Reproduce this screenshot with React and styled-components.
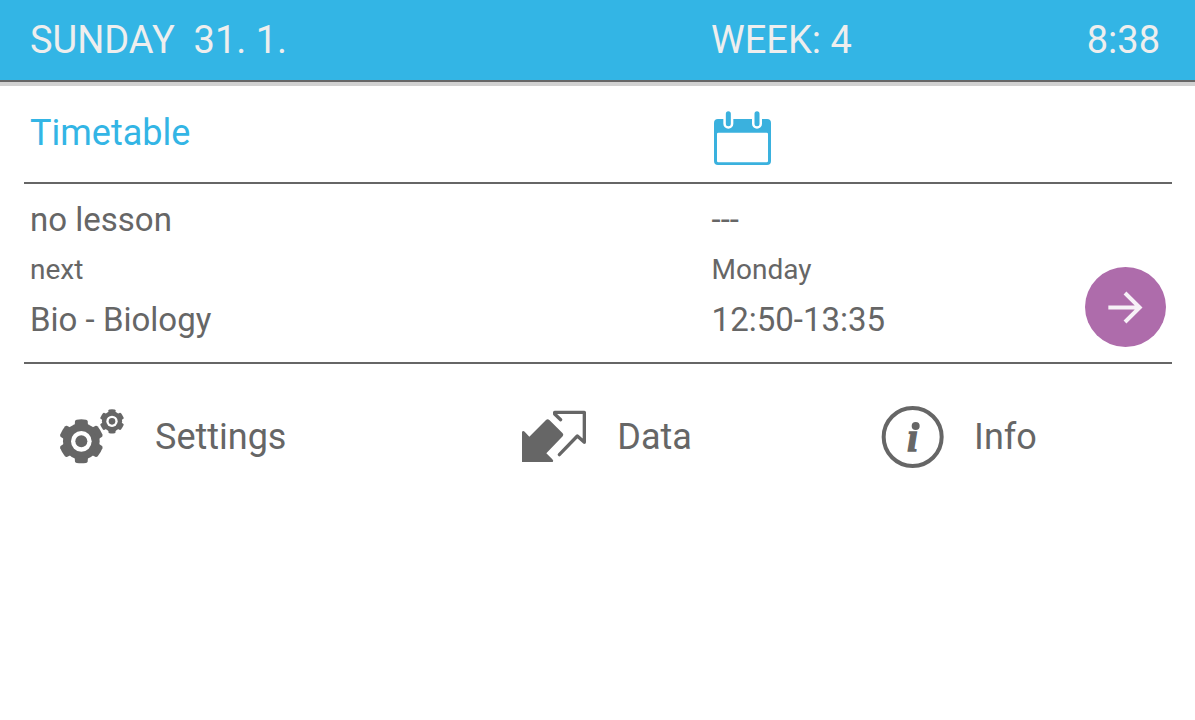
import React from "react";
import styled, {createGlobalStyle} from "styled-components";

const BLUE = '#33b5e5';
const GREY = '#666666';

const GlobalStyle = createGlobalStyle`
    body {
        margin: 0;
        background: #ffffff;
        color: ${GREY};
        font-family: Roboto, "Liberation Sans", sans-serif;
    }

    svg {
        display: block;
        flex: none;
    }
`;

const Header = styled.header`
    display: grid;
    grid-template-columns: 3fr 2fr;
    padding: 0 30px;
    background: ${BLUE};
    border-bottom: 2px solid ${GREY};
    box-shadow: 0 4px 0 #d1d1d1;
    color: #eeeeee;
    font-size: 38px;
    line-height: 80px;
    white-space: pre;
`;

const HeaderEnd = styled.div`
    display: flex;
    justify-content: space-between;
    padding-right: 5px;
`;

const Main = styled.main`
    padding: 4px 23px 0 24px;
`;

const TitleRow = styled.div`
    display: grid;
    grid-template-columns: 3fr 2fr;
    height: 96px;
    padding: 0 6px;
    border-bottom: 2px solid ${GREY};
`;

const Title = styled.h1`
    margin: 0;
    color: ${BLUE};
    font-size: 36px;
    font-weight: 400;
    line-height: 94px;
`;

const CalendarLink = styled.a`
    justify-self: start;
    padding: 24px 2px 0;
`;

const Lessons = styled.section`
    display: grid;
    grid-template-columns: 3fr 2fr;
    grid-template-rows: 50px 50px 52px;
    padding: 11px 6px 15px;
    border-bottom: 2px solid ${GREY};
`;

const Cell = styled.div`
    grid-column: ${(props) => props.$column};
    grid-row: ${(props) => props.$row};
    font-size: ${(props) => props.$small ? '28px' : '33px'};
    line-height: 50px;
`;

const NextButton = styled.button`
    grid-column: 2;
    grid-row: 2 / 4;
    place-self: end;
    display: flex;
    align-items: center;
    justify-content: center;
    width: 81px;
    height: 80px;
    padding: 0;
    border: 0;
    border-radius: 50%;
    background: #ae6cab;
    cursor: pointer;
`;

const Menu = styled.nav`
    display: grid;
    grid-template-columns: 31fr 24fr 21fr;
    padding: 40px 0 0 59px;
`;

const MenuLink = styled.a`
    display: flex;
    align-items: center;
    gap: 30px;
    height: 65px;
    color: ${GREY};
    font-size: 36px;
    text-decoration: none;
`;

const CalendarIcon = () => (
    <svg width="58" height="56" viewBox="42 30 174 168" fill="none" aria-hidden="true">
        <path
            fill="#3ab1de"
            fillRule="evenodd"
            d="M54 57h147a12 12 0 0 1 12 12v114a12 12 0 0 1-12 12H54a12 12 0 0 1-12-12V69a12 12 0 0 1 12-12zM55 98a4 4 0 0 0-4 4v81a4 4 0 0 0 4 4h145a4 4 0 0 0 4-4v-81a4 4 0 0 0-4-4z"
        />
        <path stroke="#ffffff" strokeWidth="30" strokeLinecap="round" d="M85 40v31M171 40v31"/>
        <path stroke="#3ab1de" strokeWidth="15" strokeLinecap="round" d="M85 41v30M171 41v30"/>
    </svg>
);

const Gear = ({x, y, scale}) => (
    <g transform={`translate(${x} ${y}) scale(${scale})`}>
        <circle r="55" fill={GREY}/>
        {
            [0, 60, 120, 180, 240, 300].map((angle) => (
                <path
                    key={angle}
                    transform={`rotate(${angle})`}
                    fill={GREY}
                    d="M-20 -46L-19 -61Q-18 -64 -14 -65Q0 -67 14 -65Q18 -64 19 -61L20 -46z"
                />
            ))
        }
        <circle r="31" fill="#ffffff"/>
        <circle r="18" fill={GREY}/>
    </g>
);

const SettingsIcon = () => (
    <svg width="66" height="58" viewBox="27 23 198 174" aria-hidden="true">
        <Gear x={94} y={123} scale={1}/>
        <Gear x={186} y={63} scale={0.55}/>
    </svg>
);

const DataIcon = () => (
    <svg width="65" height="56" viewBox="36 27 195 168" fill="none" aria-hidden="true">
        <path
            fill={GREY}
            d="M36 95q4-4 8 0l14 15 50-50q5-4 10 0l40 40q4 4 0 9l-49 51 18 18q5 5 1 8H36z"
        />
        <path
            stroke={GREY}
            strokeWidth="10"
            strokeLinecap="round"
            strokeLinejoin="round"
            d="M152 59L134 42V37H223V127L202 108L148 164"
        />
    </svg>
);

const InfoIcon = () => (
    <svg width="63" height="62" viewBox="34 28 189 186" aria-hidden="true">
        <circle cx="129" cy="121" r="87" fill="none" stroke={GREY} strokeWidth="12"/>
        <circle cx="138" cy="88" r="12" fill={GREY}/>
        <text
            x="129"
            y="163"
            fill={GREY}
            stroke={GREY}
            strokeWidth="4"
            fontFamily="Liberation Serif, serif"
            fontSize="118"
            fontStyle="italic"
            fontWeight="700"
            textAnchor="middle"
        >
            ı
        </text>
    </svg>
);

const ArrowIcon = () => (
    <svg width="35" height="33" viewBox="144 151 105 99" fill="none" aria-hidden="true">
        <path stroke="#f7f1f7" strokeWidth="12" d="M145 200.500H238M195 157L239 200.500L195 244"/>
    </svg>
);

const menuItems = [
    {label: 'Settings', href: '#settings', Icon: SettingsIcon},
    {label: 'Data', href: '#data', Icon: DataIcon},
    {label: 'Info', href: '#info', Icon: InfoIcon},
];

const App = () => {
    return (
        <>
            <GlobalStyle/>
            <Header>
                <span>{'SUNDAY  31. 1.'}</span>
                <HeaderEnd>
                    <span>WEEK: 4</span>
                    <time>8:38</time>
                </HeaderEnd>
            </Header>

            <Main>
                <TitleRow>
                    <Title>Timetable</Title>
                    <CalendarLink href="#timetable" aria-label="Timetable">
                        <CalendarIcon/>
                    </CalendarLink>
                </TitleRow>

                <Lessons>
                    <Cell $column={1} $row={1}>no lesson</Cell>
                    <Cell $column={2} $row={1}>---</Cell>
                    <Cell $column={1} $row={2} $small>next</Cell>
                    <Cell $column={2} $row={2} $small>Monday</Cell>
                    <Cell $column={1} $row={3}>Bio - Biology</Cell>
                    <Cell $column={2} $row={3}>12:50-13:35</Cell>
                    <NextButton type="button" aria-label="Next lesson">
                        <ArrowIcon/>
                    </NextButton>
                </Lessons>
            </Main>

            <Menu>
                {
                    menuItems.map(({label, href, Icon}) => (
                        <MenuLink key={label} href={href}>
                            <Icon/>
                            {label}
                        </MenuLink>
                    ))
                }
            </Menu>
        </>
    );
};

export default App;
